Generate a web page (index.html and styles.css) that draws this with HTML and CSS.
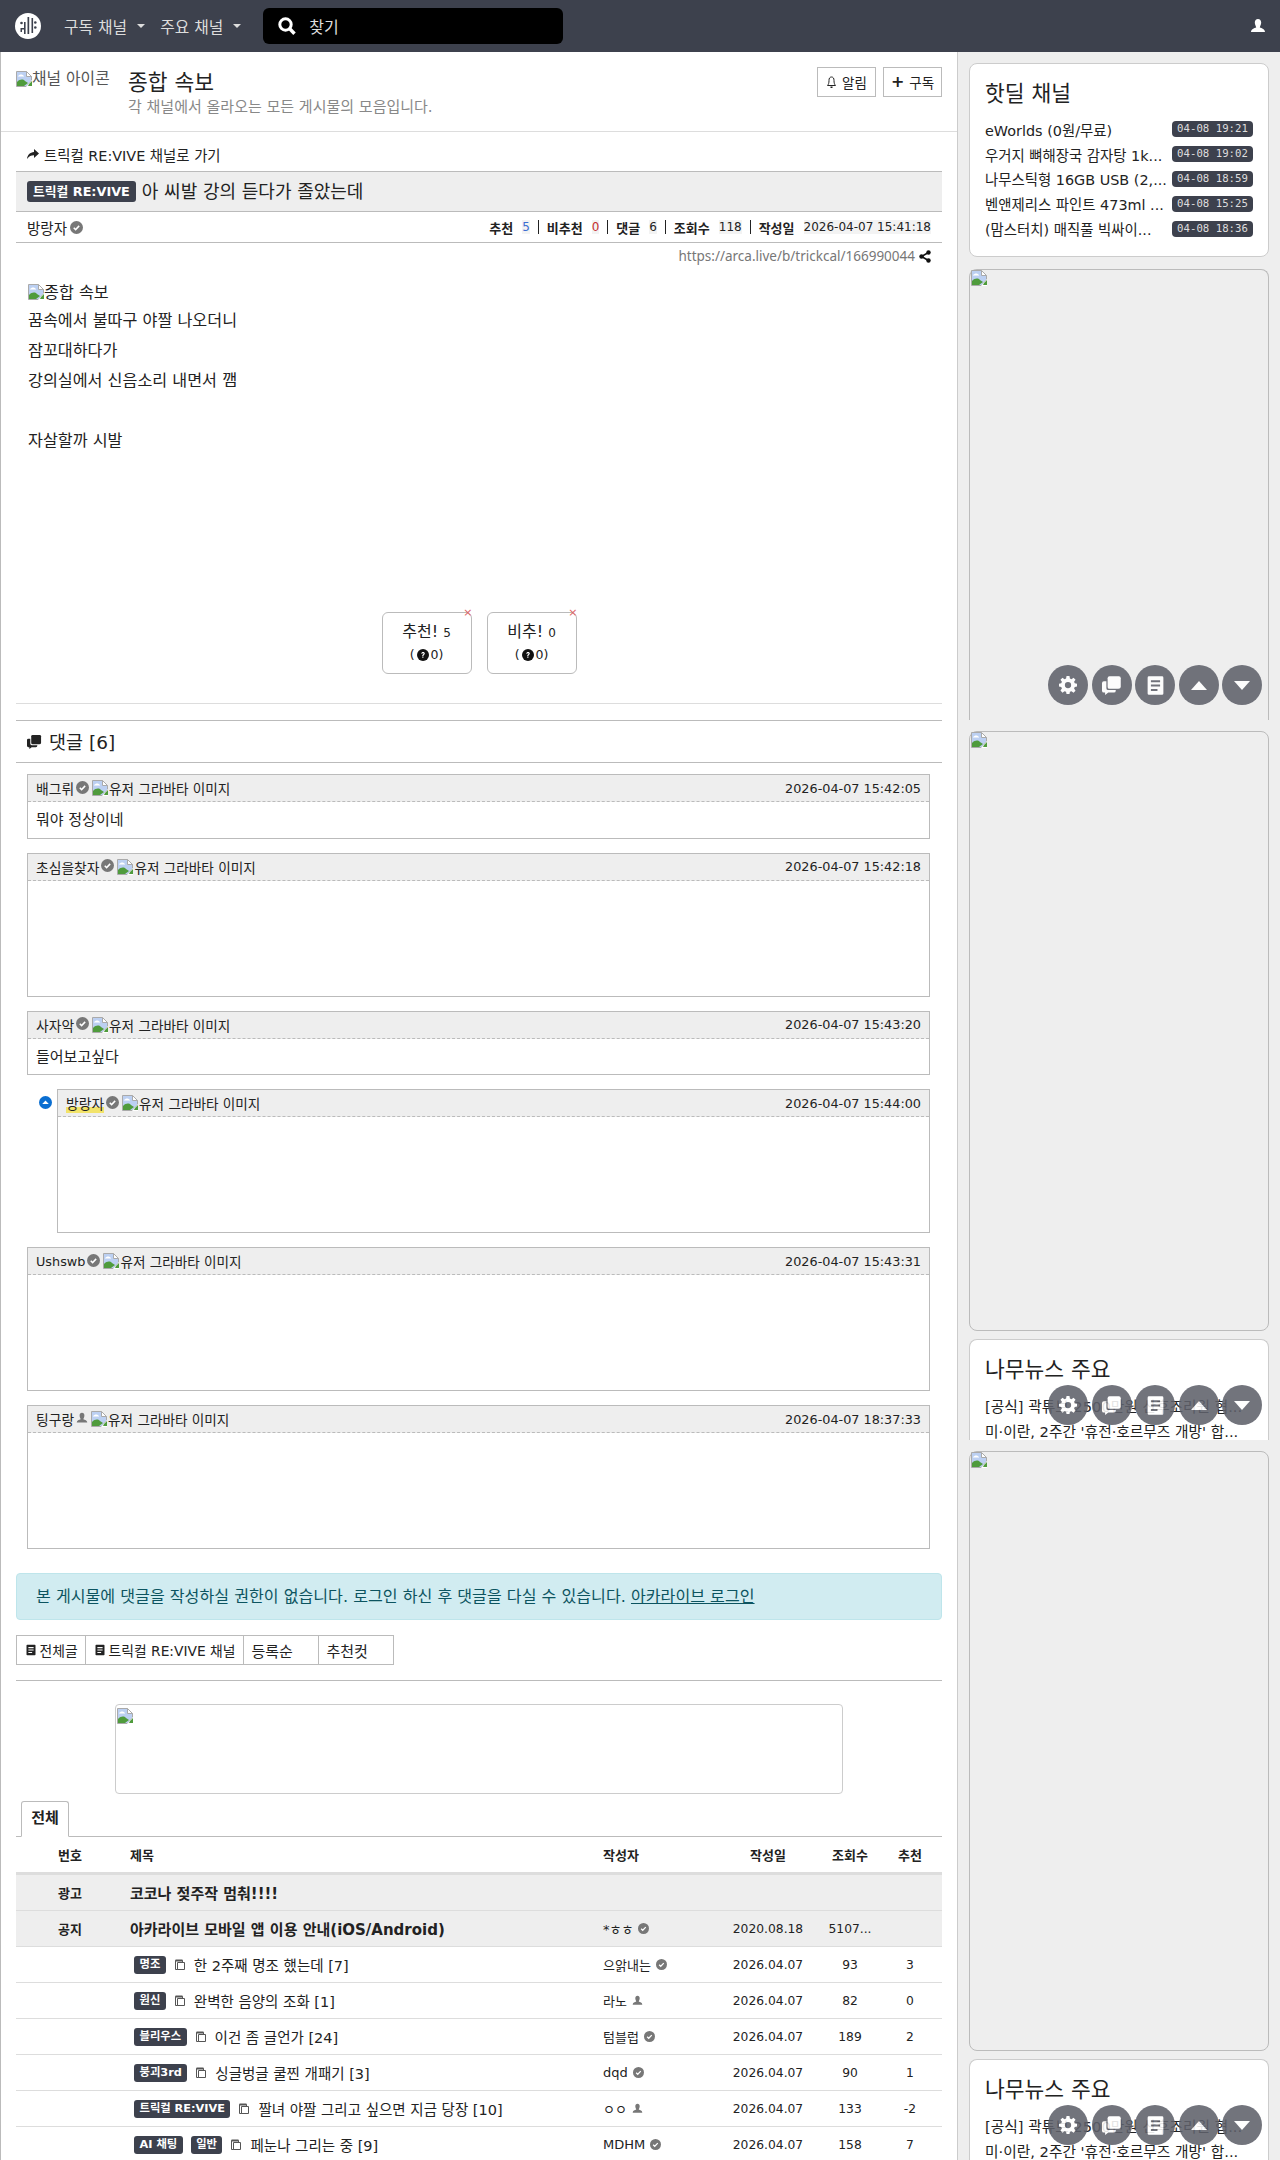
FILE: index.html
```html
<!DOCTYPE html>
<html lang="ko">
<head>
  <meta charset="UTF-8">
  <title>아 씨발 강의 듣다가 졸았는데 - 종합 속보</title>
  <link rel="stylesheet" href="styles.css">
</head>
<body>
  <svg class="defs" width="0" height="0">
    <symbol id="i-broken" viewBox="0 0 16 16">
      <path d="M.5.5h10l5 5v4l-5 6H.5z" fill="#bcd0f2" stroke="#aaa"/>
      <path d="M10.500.5v5h5z" fill="#fff" stroke="#aaa"/>
      <path d="M3 4.500c.6-1.300 3.400-1.500 4.200 0 .7.1 1 .5.9.9H2c0-.4.400-.9 1-.9z" fill="#fff"/>
      <path d="M1 15V11c3-3 6-3 8-1l3 2-4 3z" fill="#4f9b3c"/>
      <path d="M16 9l-6 7h6z" fill="#fff"/>
      <path d="M13 13l3-3v5h-4z" fill="#4f9b3c"/>
    </symbol>
    <symbol id="i-check" viewBox="0 0 16 16">
      <circle cx="8" cy="8" r="8" fill="#777"/>
      <path d="M4.6 8.3l2.3 2.3 4.4-4.6" fill="none" stroke="#fff" stroke-width="1.8"/>
    </symbol>
    <symbol id="i-user" viewBox="0 0 16 16">
      <path d="M8 1c2 0 3.200 1.500 3.200 3.600S10 8.500 9.800 9.500c2 .8 5.200 1.500 5.200 4.500H1c0-3 3.200-3.700 5.200-4.500C6 8.500 4.800 6.700 4.800 4.600S6 1 8 1z" fill="currentColor"/>
    </symbol>
    <symbol id="i-doc" viewBox="0 0 16 16">
      <path d="M3 1h10a1 1 0 0 1 1 1v12a1 1 0 0 1-1 1H3a1 1 0 0 1-1-1V2a1 1 0 0 1 1-1zm1.500 3v1.500h7V4zm0 3.300v1.500h7V7.300zm0 3.300v1.500h5v-1.500z" fill="currentColor" fill-rule="evenodd"/>
    </symbol>
    <symbol id="i-comments" viewBox="0 0 16 16">
      <path d="M6 1h7.500A1.500 1.500 0 0 1 15 2.500V9a2 2 0 0 1-2 2H6a1.500 1.500 0 0 1-1.500-1.500v-7A1.500 1.500 0 0 1 6 1z" fill="currentColor"/>
      <path d="M1.500 5H3.500v5.500A1.500 1.500 0 0 0 5 12h6v.5A1.500 1.500 0 0 1 9.500 14H5l-2.500 2v-2H1.500A1.500 1.500 0 0 1 0 12.500v-6A1.500 1.500 0 0 1 1.500 5z" fill="currentColor"/>
    </symbol>
    <symbol id="i-post" viewBox="0 0 12 12">
      <path d="M1.500 1.500h7v9h-7z" fill="none" stroke="#555"/>
      <path d="M3.500 3.500h7v7h-7z" fill="#fff" stroke="#555"/>
      <path d="M1.500 1.500h7" stroke="#555" stroke-width="2"/>
    </symbol>
    <symbol id="i-gear" viewBox="0 0 16 16">
      <path d="M6.700 0h2.600l.4 2.200 1.400.6L12.900 1.500l1.800 1.800-1.300 1.800.6 1.400L16 6.900v2.500l-2 .4-.6 1.400 1.300 1.800-1.800 1.800-1.800-1.300-1.400.6-.4 2H6.700l-.4-2-1.400-.6-1.800 1.300-1.800-1.800 1.300-1.800-.6-1.400-2-.4V6.900l2-.4.6-1.400-1.300-1.800 1.800-1.800L4.900 2.800l1.400-.6zM8 5.300a2.800 2.800 0 1 0 0 5.600 2.800 2.800 0 0 0 0-5.600z" fill="currentColor" fill-rule="evenodd"/>
    </symbol>
    <symbol id="i-help" viewBox="0 0 16 16">
      <circle cx="8" cy="8" r="8" fill="#111"/>
      <path d="M5.700 6.200C5.800 4.800 6.800 4 8.100 4c1.400 0 2.300.9 2.300 2 0 1-.6 1.400-1.200 1.900-.5.400-.6.600-.6 1.300H7c0-1 .2-1.500.9-2 .5-.4.800-.7.800-1.100 0-.5-.3-.8-.7-.8s-.8.300-.8.900zM7 10h1.600v1.700H7z" fill="#fff"/>
    </symbol>
  </svg>

  <div class="page">
    <header class="topbar">
      <a class="logo">
        <svg width="26" height="26" viewBox="0 0 26 26">
          <circle cx="13" cy="13" r="13" fill="#fff"/>
          <path d="M12.500 4h1.700v17h-1.700zM16.500 5h1.600v15h-1.600zM9 9h1.600v12H9zM5.500 15h4v1.500h-4zM5.500 15h1.500v4H5.500z" fill="#3d414d"/>
          <circle cx="6.500" cy="10" r="1.300" fill="#3d414d"/>
          <circle cx="20.300" cy="9.500" r="1.300" fill="#3d414d"/>
          <circle cx="20.300" cy="14.500" r="1.300" fill="#3d414d"/>
        </svg>
      </a>
      <a class="nav-link">구독 채널<span class="caret"></span></a>
      <a class="nav-link">주요 채널<span class="caret"></span></a>
      <div class="search">
        <svg width="18" height="18" viewBox="0 0 18 18">
          <circle cx="7.500" cy="7.500" r="5.700" fill="none" stroke="#fff" stroke-width="3"/>
          <path d="M11.500 11.500l5 5.200" stroke="#fff" stroke-width="3.400"/>
        </svg>
        <span>찾기</span>
      </div>
      <svg class="user-btn" width="16" height="16"><use href="#i-user"/></svg>
    </header>

    <div class="wrap">
      <main class="content">
        <section class="board-head">
          <div class="board-icon">
            <svg width="16" height="16"><use href="#i-broken"/></svg><span>채널 아이콘</span>
          </div>
          <div class="board-info">
            <h1>종합 속보</h1>
            <p>각 채널에서 올라오는 모든 게시물의 모음입니다.</p>
          </div>
          <div class="board-btns">
            <a class="btn-sm">
              <svg width="11" height="13" viewBox="0 0 11 13"><path d="M5.500 1C3.600 1 3 2.500 3 4.500c0 2.500-.5 3.800-1.500 5h8C8.500 8.300 8 7 8 4.500 8 2.500 7.400 1 5.500 1z" fill="none" stroke="#222"/><path d="M4.500 10.500h2v1.500h-2z" fill="#222"/></svg>
              알림
            </a>
            <a class="btn-sm"><span class="plus">+</span> 구독</a>
          </div>
        </section>

        <article class="post">
          <a class="back-link">
            <svg width="12" height="10" viewBox="0 0 12 10"><path d="M7 0l5 4.500L7 9V6.300C4 6.300 2 7.300 0 10c.5-4 3-6.700 7-7z" fill="#222"/></svg>
            트릭컬 RE:VIVE 채널로 가기
          </a>
          <div class="post-title"><span class="badge badge-lg">트릭컬 RE:VIVE</span> 아 씨발 강의 듣다가 졸았는데</div>
          <div class="post-meta">
            <span class="author">방랑자<svg width="13" height="13"><use href="#i-check"/></svg></span>
            <div class="stats">
              <b>추천</b><span class="val up">5</span><i></i>
              <b>비추천</b><span class="val down">0</span><i></i>
              <b>댓글</b><span class="val">6</span><i></i>
              <b>조회수</b><span class="val">118</span><i></i>
              <b>작성일</b><span class="val">2026-04-07 15:41:18</span>
            </div>
          </div>
          <div class="post-url">
            https://arca.live/b/trickcal/166990044
            <svg width="12" height="13" viewBox="0 0 12 13"><path d="M9.500 2.500l-7 4 7 4" fill="none" stroke="#111" stroke-width="1.600"/><circle cx="9.500" cy="2.500" r="2.200" fill="#111"/><circle cx="2.500" cy="6.500" r="2.200" fill="#111"/><circle cx="9.500" cy="10.500" r="2.200" fill="#111"/></svg>
          </div>
          <div class="post-body">
            <div class="body-img"><svg width="16" height="16"><use href="#i-broken"/></svg><span>종합 속보</span></div>
            <p>꿈속에서 불따구 야짤 나오더니</p>
            <p>잠꼬대하다가</p>
            <p>강의실에서 신음소리 내면서 깸</p>
            <p>&nbsp;</p>
            <p>자살할까 시발</p>
          </div>
          <div class="votes">
            <div class="vote">
              <span class="vote-x">×</span>
              <div class="vote-main">추천! <small>5</small></div>
              <div class="vote-sub">(<svg width="12" height="12"><use href="#i-help"/></svg> 0)</div>
            </div>
            <div class="vote">
              <span class="vote-x">×</span>
              <div class="vote-main">비추! <small>0</small></div>
              <div class="vote-sub">(<svg width="12" height="12"><use href="#i-help"/></svg> 0)</div>
            </div>
          </div>
        </article>

        <section class="comments">
          <h2 class="comments-title"><svg width="15" height="15"><use href="#i-comments"/></svg> 댓글 [6]</h2>

          <div class="comment">
            <div class="comment-head">
              <span class="cname">배그뤼</span><svg class="cmark" width="13" height="13"><use href="#i-check"/></svg>
              <span class="cavatar"><svg width="16" height="16"><use href="#i-broken"/></svg>유저 그라바타 이미지</span>
              <time>2026-04-07 15:42:05</time>
            </div>
            <div class="comment-text">뭐야 정상이네</div>
          </div>

          <div class="comment">
            <div class="comment-head">
              <span class="cname">초심을찾자</span><svg class="cmark" width="13" height="13"><use href="#i-check"/></svg>
              <span class="cavatar"><svg width="16" height="16"><use href="#i-broken"/></svg>유저 그라바타 이미지</span>
              <time>2026-04-07 15:42:18</time>
            </div>
            <div class="comment-empty"></div>
          </div>

          <div class="comment">
            <div class="comment-head">
              <span class="cname">사자악</span><svg class="cmark" width="13" height="13"><use href="#i-check"/></svg>
              <span class="cavatar"><svg width="16" height="16"><use href="#i-broken"/></svg>유저 그라바타 이미지</span>
              <time>2026-04-07 15:43:20</time>
            </div>
            <div class="comment-text">들어보고싶다</div>
          </div>

          <div class="reply-row">
            <svg class="reply-mark" width="13" height="13" viewBox="0 0 14 14"><circle cx="7" cy="7" r="7" fill="#0a6ed1"/><path d="M3.500 8.700L7 4.800l3.500 3.900z" fill="#fff"/></svg>
            <div class="comment">
              <div class="comment-head">
                <span class="cname op">방랑자</span><svg class="cmark" width="13" height="13"><use href="#i-check"/></svg>
                <span class="cavatar"><svg width="16" height="16"><use href="#i-broken"/></svg>유저 그라바타 이미지</span>
                <time>2026-04-07 15:44:00</time>
              </div>
              <div class="comment-empty"></div>
            </div>
          </div>

          <div class="comment">
            <div class="comment-head">
              <span class="cname cname-lat">Ushswb</span><svg class="cmark" width="13" height="13"><use href="#i-check"/></svg>
              <span class="cavatar"><svg width="16" height="16"><use href="#i-broken"/></svg>유저 그라바타 이미지</span>
              <time>2026-04-07 15:43:31</time>
            </div>
            <div class="comment-empty"></div>
          </div>

          <div class="comment">
            <div class="comment-head">
              <span class="cname">팅구랑</span><svg class="cmark gray" width="12" height="12"><use href="#i-user"/></svg>
              <span class="cavatar"><svg width="16" height="16"><use href="#i-broken"/></svg>유저 그라바타 이미지</span>
              <time>2026-04-07 18:37:33</time>
            </div>
            <div class="comment-empty"></div>
          </div>
        </section>

        <div class="alert">본 게시물에 댓글을 작성하실 권한이 없습니다. 로그인 하신 후 댓글을 다실 수 있습니다. <a>아카라이브 로그인</a></div>

        <div class="list-btns">
          <a><svg width="12" height="12"><use href="#i-doc"/></svg>전체글</a>
          <a><svg width="12" height="12"><use href="#i-doc"/></svg>트릭컬 RE:VIVE 채널</a>
          <a class="plain">등록순</a>
          <a class="plain">추천컷</a>
        </div>

        <div class="banner"><svg width="16" height="16"><use href="#i-broken"/></svg></div>

        <div class="tabs"><span class="tab">전체</span></div>

        <div class="table">
          <div class="tr th">
            <span class="c-no">번호</span><span class="c-title">제목</span><span class="c-author">작성자</span><span class="c-date">작성일</span><span class="c-view">조회수</span><span class="c-vote">추천</span>
          </div>
          <div class="tr shade">
            <span class="c-no strong">광고</span><span class="c-title strong">코코나 젖주작 멈춰!!!!</span><span class="c-author"></span><span class="c-date"></span><span class="c-view"></span><span class="c-vote"></span>
          </div>
          <div class="tr shade">
            <span class="c-no strong">공지</span><span class="c-title strong">아카라이브 모바일 앱 이용 안내(iOS/Android)</span><span class="c-author">*ㅎㅎ<svg width="11" height="11"><use href="#i-check"/></svg></span><span class="c-date">2020.08.18</span><span class="c-view">5107...</span><span class="c-vote"></span>
          </div>
          <div class="tr">
            <span class="c-no"></span><span class="c-title"><em class="badge">명조</em><svg class="post-ico" width="12" height="12"><use href="#i-post"/></svg>한 2주째 명조 했는데 [7]</span><span class="c-author">으앍내는<svg width="11" height="11"><use href="#i-check"/></svg></span><span class="c-date">2026.04.07</span><span class="c-view">93</span><span class="c-vote">3</span>
          </div>
          <div class="tr">
            <span class="c-no"></span><span class="c-title"><em class="badge">원신</em><svg class="post-ico" width="12" height="12"><use href="#i-post"/></svg>완벽한 음양의 조화 [1]</span><span class="c-author">라노<svg class="gray" width="11" height="11"><use href="#i-user"/></svg></span><span class="c-date">2026.04.07</span><span class="c-view">82</span><span class="c-vote">0</span>
          </div>
          <div class="tr">
            <span class="c-no"></span><span class="c-title"><em class="badge">블리우스</em><svg class="post-ico" width="12" height="12"><use href="#i-post"/></svg>이건 좀 글언가 [24]</span><span class="c-author">텀블럽<svg width="11" height="11"><use href="#i-check"/></svg></span><span class="c-date">2026.04.07</span><span class="c-view">189</span><span class="c-vote">2</span>
          </div>
          <div class="tr">
            <span class="c-no"></span><span class="c-title"><em class="badge">붕괴3rd</em><svg class="post-ico" width="12" height="12"><use href="#i-post"/></svg>싱글벙글 쿨찐 개패기 [3]</span><span class="c-author">dqd<svg width="11" height="11"><use href="#i-check"/></svg></span><span class="c-date">2026.04.07</span><span class="c-view">90</span><span class="c-vote">1</span>
          </div>
          <div class="tr">
            <span class="c-no"></span><span class="c-title"><em class="badge">트릭컬 RE:VIVE</em><svg class="post-ico" width="12" height="12"><use href="#i-post"/></svg>짤녀 야짤 그리고 싶으면 지금 당장 [10]</span><span class="c-author">ㅇㅇ<svg class="gray" width="11" height="11"><use href="#i-user"/></svg></span><span class="c-date">2026.04.07</span><span class="c-view">133</span><span class="c-vote">-2</span>
          </div>
          <div class="tr">
            <span class="c-no"></span><span class="c-title"><em class="badge">AI 채팅</em><em class="badge">일반</em><svg class="post-ico" width="12" height="12"><use href="#i-post"/></svg>페눈나 그리는 중 [9]</span><span class="c-author">MDHM<svg width="11" height="11"><use href="#i-check"/></svg></span><span class="c-date">2026.04.07</span><span class="c-view">158</span><span class="c-vote">7</span>
          </div>
        </div>
      </main>

      <aside class="sidebar">
        <div class="card card-deals">
          <h3>핫딜 채널</h3>
          <ul class="deals">
            <li><span>eWorlds (0원/무료)</span><time>04-08 19:21</time></li>
            <li><span>우거지 뼈해장국 감자탕 1k...</span><time>04-08 19:02</time></li>
            <li><span>나무스틱형 16GB USB (2,...</span><time>04-08 18:59</time></li>
            <li><span>벤앤제리스 파인트 473ml ...</span><time>04-08 15:25</time></li>
            <li><span>(맘스터치) 매직풀 빅싸이...</span><time>04-08 18:36</time></li>
          </ul>
        </div>
        <div class="ad ad-a"><svg width="16" height="16"><use href="#i-broken"/></svg></div>
        <div class="ad ad-b"><svg width="16" height="16"><use href="#i-broken"/></svg></div>
        <div class="card card-news">
          <h3>나무뉴스 주요</h3>
          <p>[공식] 곽튜브 2500만원 산후조리원 협...</p>
          <p>미·이란, 2주간 '휴전·호르무즈 개방' 합...</p>
        </div>
        <div class="ad ad-b"><svg width="16" height="16"><use href="#i-broken"/></svg></div>
        <div class="card card-news">
          <h3>나무뉴스 주요</h3>
          <p>[공식] 곽튜브 2500만원 산후조리원 협...</p>
          <p>미·이란, 2주간 '휴전·호르무즈 개방' 합...</p>
        </div>
      </aside>
    </div>

    <div class="float-btns at-1">
      <a><svg width="18" height="18"><use href="#i-gear"/></svg></a>
      <a><svg width="20" height="20"><use href="#i-comments"/></svg></a>
      <a><svg width="21" height="21"><use href="#i-doc"/></svg></a>
      <a><span class="tri up"></span></a>
      <a><span class="tri"></span></a>
    </div>
    <div class="float-btns at-2">
      <a><svg width="18" height="18"><use href="#i-gear"/></svg></a>
      <a><svg width="20" height="20"><use href="#i-comments"/></svg></a>
      <a><svg width="21" height="21"><use href="#i-doc"/></svg></a>
      <a><span class="tri up"></span></a>
      <a><span class="tri"></span></a>
    </div>
    <div class="float-btns at-3">
      <a><svg width="18" height="18"><use href="#i-gear"/></svg></a>
      <a><svg width="20" height="20"><use href="#i-comments"/></svg></a>
      <a><svg width="21" height="21"><use href="#i-doc"/></svg></a>
      <a><span class="tri up"></span></a>
      <a><span class="tri"></span></a>
    </div>
  </div>
</body>
</html>
```

FILE: styles.css
```css
* {
  box-sizing: border-box;
}
html, body {
  margin: 0;
  padding: 0;
}
body {
  font-family: "DejaVu Sans", "Noto Sans CJK KR", sans-serif;
  font-size: 15px;
  color: #222;
  background: #eee;
}
.defs {
  position: absolute;
}
svg {
  flex: none;
}
.page {
  position: relative;
  height: 2160px;
  overflow: hidden;
}

/* top bar */
.topbar {
  display: flex;
  align-items: center;
  height: 52px;
  padding: 0 14px 0 15px;
  background: #3d414d;
  color: #ddd;
}
.logo {
  display: flex;
  margin-right: 23px;
}
.nav-link {
  display: flex;
  align-items: center;
  margin-right: 15px;
  font-size: 15.800px;
}
.caret {
  width: 0;
  height: 0;
  margin-left: 10px;
  border: 4px solid transparent;
  border-top-color: #ddd;
  border-bottom: 0;
}
.search {
  display: flex;
  align-items: center;
  gap: 13px;
  width: 300px;
  height: 36px;
  margin-left: 7px;
  padding-left: 15px;
  background: #000;
  border-radius: 6px;
  font-size: 16px;
}
.user-btn {
  margin-left: auto;
  color: #fff;
}

.wrap {
  display: flex;
  align-items: flex-start;
}
.content {
  width: 958px;
  height: 2108px;
  padding: 0 15px;
  background: #fff;
  border-left: 1px solid #bbb;
  border-right: 1px solid #ccc;
}

/* channel head */
.board-head {
  display: flex;
  height: 80px;
  margin: 0 -15px;
  padding: 15px 15px 0;
  border-bottom: 1px solid #ddd;
}
.board-icon {
  display: flex;
  width: 95px;
  height: 16px;
  margin: 4px 17px 0 0;
  font-size: 15.800px;
  line-height: 16px;
  color: #555;
  white-space: nowrap;
}
.board-info h1 {
  margin: 2px 0 0;
  font-size: 21.500px;
  font-weight: 400;
  line-height: 28px;
  color: #222;
}
.board-info p {
  margin: 1px 0 0;
  font-size: 15px;
  line-height: 18px;
  color: #888;
}
.board-btns {
  display: flex;
  gap: 7px;
  margin-left: auto;
}
.btn-sm {
  display: flex;
  align-items: center;
  justify-content: center;
  gap: 5px;
  width: 59px;
  height: 30px;
  font-size: 13.500px;
  border: 1px solid #bbb;
}
.plus {
  font-size: 16px;
  font-weight: 700;
  line-height: 1;
}

/* post */
.post {
  height: 572px;
  border-bottom: 1px solid #ddd;
}
.back-link {
  display: flex;
  align-items: center;
  gap: 5px;
  height: 39px;
  padding: 5px 0 0 11px;
  font-size: 14.400px;
}
.post-title {
  display: flex;
  align-items: center;
  gap: 6px;
  height: 41px;
  padding: 0 0 3px 11px;
  background: #eee;
  border-top: 1px solid #bbb;
  border-bottom: 1px solid #bbb;
  font-size: 18px;
}
.badge {
  display: inline-block;
  padding: 0 5.500px;
  height: 18px;
  margin-right: 8px;
  background: #3d414d;
  border-radius: 3px;
  color: #fff;
  font-size: 11.300px;
  font-style: normal;
  font-weight: 700;
  line-height: 18px;
  white-space: nowrap;
}
.badge-lg {
  height: 21px;
  margin: 3px 0 0;
  padding: 0 6px;
  font-size: 12.800px;
  line-height: 21px;
}
.post-meta {
  display: flex;
  justify-content: space-between;
  align-items: center;
  height: 31px;
  padding: 0 11px;
  border-bottom: 1px solid #bbb;
}
.author {
  display: flex;
  align-items: center;
  gap: 3px;
  font-size: 14.500px;
}
.stats {
  display: flex;
  align-items: center;
  font-size: 12px;
}
.stats b {
  margin-right: 9px;
  font-size: 13px;
}
.stats .val {
  background: #f3f3f3;
}
.stats i {
  width: 1px;
  height: 14px;
  margin: 0 8px;
  background: #222;
}
.val.up {
  color: #3b6dd1;
}
.val.down {
  color: #c53030;
}
.post-url {
  display: flex;
  justify-content: flex-end;
  align-items: center;
  gap: 4px;
  height: 26px;
  padding-right: 11px;
  font-family: "Noto Sans", sans-serif;
  font-size: 13.500px;
  color: #777;
}
.post-body {
  height: 343px;
  padding: 15px 0 0 12px;
  font-size: 16.200px;
}
.body-img {
  display: flex;
  height: 22px;
  align-items: flex-start;
  line-height: 17px;
}
.post-body p {
  margin: 0;
  line-height: 30px;
}
.votes {
  display: flex;
  justify-content: center;
  gap: 15px;
}
.vote {
  position: relative;
  width: 90px;
  height: 62px;
  padding-top: 9px;
  border: 1px solid #bbb;
  border-radius: 6px;
  text-align: center;
}
.vote-x {
  position: absolute;
  top: -6px;
  right: -2px;
  font-size: 11px;
  line-height: 12px;
  color: #d66;
}
.vote-main {
  font-size: 16px;
  line-height: 20px;
}
.vote-main small {
  font-size: 12px;
}
.vote-sub {
  display: flex;
  align-items: center;
  justify-content: center;
  gap: 2px;
  margin-top: 4px;
  font-size: 12.500px;
  line-height: 16px;
}

/* comments */
.comments {
  margin-top: 16px;
  padding: 0 12px 0 11px;
  border-top: 1px solid #bbb;
}
.comments-title {
  display: flex;
  align-items: center;
  gap: 7px;
  height: 42px;
  margin: 0 -12px 11px -11px;
  padding: 0 0 1px 11px;
  border-bottom: 1px solid #bbb;
  font-size: 18.500px;
  font-weight: 400;
}
.comment {
  margin-bottom: 14px;
  border: 1px solid #bbb;
  background: #fff;
}
.comment-head {
  display: flex;
  align-items: center;
  height: 27px;
  padding: 0 8px;
  background: #eee;
  border-bottom: 1px dashed #bbb;
  font-size: 13.800px;
}
.cname {
  white-space: nowrap;
}
.cname-lat {
  font-size: 12.800px;
}
.cname.op {
  background: linear-gradient(transparent 70%, #f2e36a 70%);
}
.cmark {
  margin: 0 3px 2px 2px;
  color: #777;
}
.cavatar {
  display: flex;
  align-items: center;
  gap: 1px;
  font-size: 13.600px;
}
.comment-head time {
  margin-left: auto;
  font-size: 12.800px;
}
.comment-text {
  height: 35.500px;
  padding: 9px 8px 0;
  font-size: 15px;
  line-height: 18px;
}
.comment-empty {
  height: 115px;
}
.reply-row {
  display: flex;
}
.reply-row .comment {
  flex: 1;
}
.reply-mark {
  margin: 7px 5px 0 12px;
}

/* alert and list head */
.alert {
  height: 47px;
  margin-top: 24px;
  padding-left: 19px;
  background: #d1ecf1;
  border: 1px solid #bee5eb;
  border-radius: 4px;
  color: #0c5460;
  font-size: 16.100px;
  line-height: 45px;
}
.alert a {
  text-decoration: underline;
}
.list-btns {
  display: flex;
  height: 46px;
  margin-top: 15px;
  padding-bottom: 15px;
  border-bottom: 1px solid #bbb;
}
.list-btns a {
  display: flex;
  align-items: center;
  gap: 3px;
  padding: 0 7.500px;
  margin-right: -1px;
  border: 1px solid #bbb;
  font-size: 13.800px;
  white-space: nowrap;
}
.list-btns .plain {
  width: 76px;
  font-size: 15px;
}
.banner {
  width: 728px;
  height: 90px;
  margin: 23px auto 0;
  padding: 3px 1px;
  border: 1px solid #ccc;
  border-radius: 4px;
}
.tabs {
  display: flex;
  align-items: flex-start;
  height: 36px;
  margin-top: 7px;
  padding-left: 5px;
  border-bottom: 1px solid #bbb;
}
.tab {
  flex: none;
  width: 48px;
  height: 36px;
  background: #fff;
  border: 1px solid #bbb;
  border-bottom: 1px solid #fff;
  border-radius: 3px 3px 0 0;
  font-size: 15px;
  font-weight: 700;
  line-height: 33px;
  text-align: center;
}

/* article table */
.tr {
  display: flex;
  align-items: center;
  height: 36px;
  border-bottom: 1px solid #ddd;
  font-size: 12.300px;
}
.th {
  height: 38px;
  border-bottom: 3px solid #ddd;
  font-size: 13px;
  font-weight: 700;
}
.shade {
  background: #eee;
}
.c-no {
  width: 114px;
  padding-left: 42px;
  font-size: 13px;
}
.c-title {
  display: flex;
  align-items: center;
  width: 473px;
  white-space: nowrap;
  font-size: 14.500px;
}
.c-title.strong {
  font-size: 15px;
  font-weight: 700;
}
.c-no.strong {
  font-weight: 700;
}
.th .c-title {
  font-size: 13px;
}
.tr:not(.th):not(.shade) .c-title {
  padding-left: 4px;
}
.post-ico {
  margin-right: 8px;
}
.c-author {
  display: flex;
  align-items: center;
  gap: 5px;
  width: 126px;
  font-size: 13px;
}
.c-author svg {
  color: #777;
}
.c-date, .c-view, .c-vote {
  text-align: center;
}
.th .c-date, .th .c-view, .th .c-vote {
  font-size: 13px;
}
.c-date {
  width: 78px;
}
.c-view {
  width: 86px;
}
.c-vote {
  width: 34px;
}
.gray {
  color: #777;
}

/* sidebar */
.sidebar {
  flex: 1;
  display: flex;
  flex-direction: column;
  gap: 11px;
  height: 2108px;
  padding: 11px 11px 0;
  overflow: hidden;
}
.card {
  flex: none;
  background: #fff;
  border: 1px solid #ccc;
  border-radius: 8px;
  padding: 16px 15px 15px;
}
.card-deals {
  margin-bottom: 1px;
}
.card h3 {
  margin: 0 0 9px;
  font-size: 21.500px;
  font-weight: 400;
  line-height: 28px;
}
.deals {
  margin: 0;
  padding: 0;
  list-style: none;
}
.deals li {
  display: flex;
  align-items: center;
  justify-content: space-between;
  height: 24.800px;
  font-size: 14.400px;
  white-space: nowrap;
}
.deals time {
  flex: none;
  width: 81px;
  height: 16px;
  background: #3d414d;
  border-radius: 4px;
  color: #ddd;
  font-family: "DejaVu Sans Mono", monospace;
  font-size: 10.700px;
  line-height: 16px;
  text-align: center;
}
.ad {
  flex: none;
  background: #eee;
  border: 1px solid #bbb;
  border-radius: 8px;
}
.ad svg {
  display: block;
  margin-left: 1px;
}
.ad-a {
  height: 451px;
  border-bottom: 0;
  border-radius: 8px 8px 0 0;
}
.ad-b {
  height: 600px;
  margin-bottom: -3px;
}
.card-news {
  height: 101px;
  padding-bottom: 0;
  border-bottom: 0;
  border-radius: 8px 8px 0 0;
  overflow: hidden;
}
.card-news h3 {
  margin-bottom: 10px;
}
.card-news p {
  margin: 0;
  font-size: 14.700px;
  line-height: 25px;
  white-space: nowrap;
}

/* floating buttons, they stay over the page */
.float-btns {
  position: absolute;
  left: 1048px;
  display: flex;
  gap: 3.500px;
}
.at-1 {
  top: 665px;
}
.at-2 {
  top: 1385px;
}
.at-3 {
  top: 2105px;
}
.float-btns a {
  display: flex;
  align-items: center;
  justify-content: center;
  width: 40px;
  height: 40px;
  background: #5f616b;
  border-radius: 50%;
  color: #fff;
  opacity: .88;
}
.tri {
  width: 0;
  height: 0;
  border-left: 8px solid transparent;
  border-right: 8px solid transparent;
  border-top: 9px solid #fff;
}
.tri.up {
  border-top: 0;
  border-bottom: 9px solid #fff;
}
```
